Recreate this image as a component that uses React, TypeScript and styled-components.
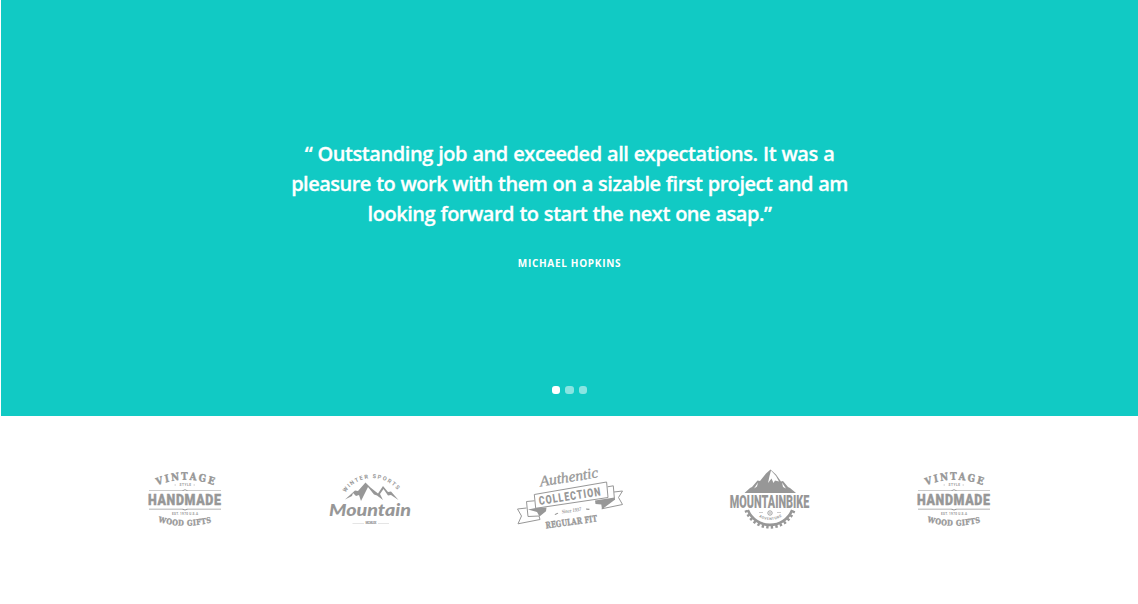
import React from "react";
import styled, { createGlobalStyle } from "styled-components";

const GlobalStyle = createGlobalStyle`
  * { box-sizing: border-box; }
  body { margin: 0; background: #fff; overflow: hidden; }
`;

const Page = styled.main`
  display: flex;
  flex-direction: column;
  height: 604px;
  font-family: "Open Sans", "Noto Sans", sans-serif;
`;

const Hero = styled.section`
  display: flex;
  flex-direction: column;
  align-items: center;
  height: 416px;
  margin-left: 1px;
  padding: 139px 0 22px;
  background: #11cac4;
  color: #fff;
`;

const Quote = styled.blockquote`
  margin: 0;
  font-size: 20px;
  font-weight: 600;
  line-height: 30px;
  text-align: center;
  word-spacing: 0.6px;
  -webkit-text-stroke: 0.3px #fff;
`;

const Line = styled.span<{ $spacing: number }>`
  display: block;
  white-space: nowrap;
  letter-spacing: ${(p) => p.$spacing}px;
`;

const Author = styled.p`
  margin: 24px 0 0;
  font-size: 10px;
  font-weight: 700;
  line-height: 20px;
  letter-spacing: 0.7px;
  text-transform: uppercase;
`;

const Dots = styled.div`
  display: flex;
  gap: 5px;
  margin-top: auto;
`;

const Dot = styled.button<{ $active?: boolean }>`
  width: ${(p) => (p.$active ? 8 : 8.5)}px;
  height: 8px;
  padding: 0;
  border: 0;
  border-radius: 3px;
  background: ${(p) => (p.$active ? "#fff" : "rgba(255, 255, 255, 0.5)")};
`;

const Partners = styled.section`
  display: flex;
  gap: 92px;
  padding: 44px 0 0 140px;
`;

const Logo = styled.svg`
  flex: none;
  height: 76px;
  fill: #979797;
  stroke: none;
`;

const slab = '"DejaVu Serif", serif';
const sans = "Roboto, sans-serif";

function Handmade({ id, width }: { id: string; width: number }) {
  return (
    <Logo width={width} viewBox={`0 -4 ${width} 76`}>
      <path id={`${id}-top`} d="M20 21.500Q53.200 10 88 21.500" fill="none" />
      <path id={`${id}-bottom`} d="M21.500 58Q53 65.500 85 58" fill="none" />
      <text transform="scale(.85 1)" fontFamily={slab} fontWeight="700" fontSize="10.200" stroke="#979797" strokeWidth=".45">
        <textPath href={`#${id}-top`} textLength="68">VINTAGE</textPath>
      </text>
      <text x="39.500" y="22.300" fontFamily={sans} fontWeight="700" fontSize="3.200" textLength="11.500">STYLE</text>
      <path d="M34.500 20.800h1.500v.5h-1.500zM53.500 20.800h1.500v.5h-1.500z" />
      <path d="M9 26.500H42L45 25.300 48 26.500H81v.6H47L45 26.300 43 27.100H9zM9 44.800H43L45 45.500 47 44.800H81v.6H48L45 46.600 42 45.400H9z" />
      <text transform="scale(.85 1)" x="9.300" y="40.900" fontFamily={sans} fontWeight="900" fontSize="14.600" textLength="86" stroke="#979797" strokeWidth=".4">HANDMADE</text>
      <text x="32" y="51.400" fontFamily={sans} fontWeight="700" fontSize="3.100" textLength="26">EST. 1970 U.S.A</text>
      <text transform="scale(.85 1)" fontFamily={slab} fontWeight="700" fontSize="7.800" stroke="#979797" strokeWidth=".35">
        <textPath href={`#${id}-bottom`} textLength="63">WOOD GIFTS</textPath>
      </text>
    </Logo>
  );
}

function Mountain() {
  return (
    <Logo width="94" viewBox="0 -4 94 76">
      <path id="winter" d="M21.500 28.500A32 32 0 0 1 75 28.500" fill="none" />
      <text fontFamily={sans} fontWeight="700" fontSize="5.600">
        <textPath href="#winter" textLength="60">WINTER SPORTS</textPath>
      </text>
      <path d="M21 35.500 31 26.500 34 27 41.500 18.500 46.500 23.500 54 29.500 59 22 64 28 67 27.500 74.500 36 67 31 64 31.500 59.500 25 56 30 59 36 53 31.500 50 30.500 44 23 41.500 28 37 37 35 31 32 32 29 29 28 32z" />
      <text x="5" y="51.500" fontFamily="Lato, sans-serif" fontStyle="italic" fontWeight="900" fontSize="17" textLength="82" lengthAdjust="spacingAndGlyphs">Mountain</text>
      <path d="M28.500 58.900H40v.4H28.500zM54 58.900h11v.4H54z" />
      <text x="41.500" y="60.200" fontFamily={sans} fontWeight="900" fontSize="3" textLength="11">MCMLXX</text>
    </Logo>
  );
}

function Collection() {
  return (
    <Logo width="120" viewBox="0 0 120 76">
      <g fill="none" stroke="#979797" strokeWidth="1">
        <path d="M24.300 34.500 96.600 22 98 37.500 25.700 48.300z" />
        <path d="M24.500 40.800 16.500 41.500 18 56.500M16.500 48 7.500 49 11.500 56 8 63.800 30 59.500 29 56 18 56.500" />
        <path d="M97.500 26.800 103.300 25.800 104.500 40M104 32 112.500 31 108.500 37.500 112.500 44.500 91.700 48.800" />
      </g>
      <path d="M18 49.500 25.700 48 36.500 47.500 36 51.300 29.500 56.500 27 52zM85 40.500 104.500 37.500 104.500 40 92 49.200 91.300 44.500 85.500 44z" />
      <text transform="translate(30.500 26.500) rotate(-9)" fontFamily='"Liberation Serif", serif' fontStyle="italic" fontSize="15" textLength="59" lengthAdjust="spacingAndGlyphs" stroke="#979797" strokeWidth=".3">Authentic</text>
      <text transform="translate(29.500 45) rotate(-8.800) scale(.74 1)" fontFamily={sans} fontWeight="900" fontSize="12" textLength="84">COLLECTION</text>
      <text transform="translate(52 53.500) rotate(-8)" fontFamily='"Liberation Serif", serif' fontStyle="italic" fontWeight="700" fontSize="5.300" textLength="19.500" lengthAdjust="spacingAndGlyphs">Since 1937</text>
      <path d="m44.500 54.300 3-1.600.8.8-3 1.500zM76 48.500l3.500.3-.2 1.300-3-.4z" />
      <text transform="translate(36 68.600) rotate(-8) scale(.72 1)" fontFamily={slab} fontWeight="700" fontSize="8.800" textLength="72" stroke="#979797" strokeWidth=".4">REGULAR FIT</text>
    </Logo>
  );
}

function Mountainbike() {
  return (
    <Logo width="95" viewBox="0 -2 95 76">
      <path d="M22.500 31 28 26 30 25 35.500 18.500 38 19 44 11.500 48.500 7.500 54 12.500 59 19.500 61 19 66 25 68 26 74 31z" />
      <path d="M49 8.500 54 14 57 19.500 53 18.500 51.500 21 49.500 16.500 46 21 47.500 14zM60 20.500l4 6-3-1.500zM36 20.500l-1 4-3 2z" fill="#fff" />
      <text x="7.800" y="46" fontFamily={sans} fontWeight="900" fontSize="17.600" textLength="79.600" lengthAdjust="spacingAndGlyphs">MOUNTAINBIKE</text>
      <g fill="none" stroke="#979797">
        <path d="M25.800 48A24 24 0 0 0 70.200 48" strokeWidth="2.600" />
        <path d="M23.800 48.200A25.700 25.700 0 0 0 72.200 48.200" strokeWidth="2.800" strokeDasharray="2.400 2.200" />
        <circle cx="48" cy="51" r="2.200" strokeWidth=".9" />
        <path d="M37 50.500h4M55 50.500h4" strokeWidth=".5" />
      </g>
      <circle cx="48" cy="51" r=".8" />
      <path id="adventure" d="M36 54.500Q48 61.500 60 54.500" fill="none" />
      <text fontFamily={sans} fontWeight="700" fontSize="3.600">
        <textPath href="#adventure" startOffset="1" textLength="24">ADVENTURE</textPath>
      </text>
    </Logo>
  );
}

export default function App() {
  return (
    <Page>
      <GlobalStyle />
      <Hero>
        <Quote>
          <Line $spacing={-0.44}>“ Outstanding job and exceeded all expectations. It was a</Line>
          <Line $spacing={-0.51}>pleasure to work with them on a sizable first project and am</Line>
          <Line $spacing={-0.48}>looking forward to start the next one asap.”</Line>
        </Quote>
        <Author>Michael Hopkins</Author>
        <Dots>
          <Dot $active aria-label="Slide 1" />
          <Dot aria-label="Slide 2" />
          <Dot aria-label="Slide 3" />
        </Dots>
      </Hero>
      <Partners>
        <Handmade id="first" width={92} />
        <Mountain />
        <Collection />
        <Mountainbike />
        <Handmade id="last" width={90} />
      </Partners>
    </Page>
  );
}
